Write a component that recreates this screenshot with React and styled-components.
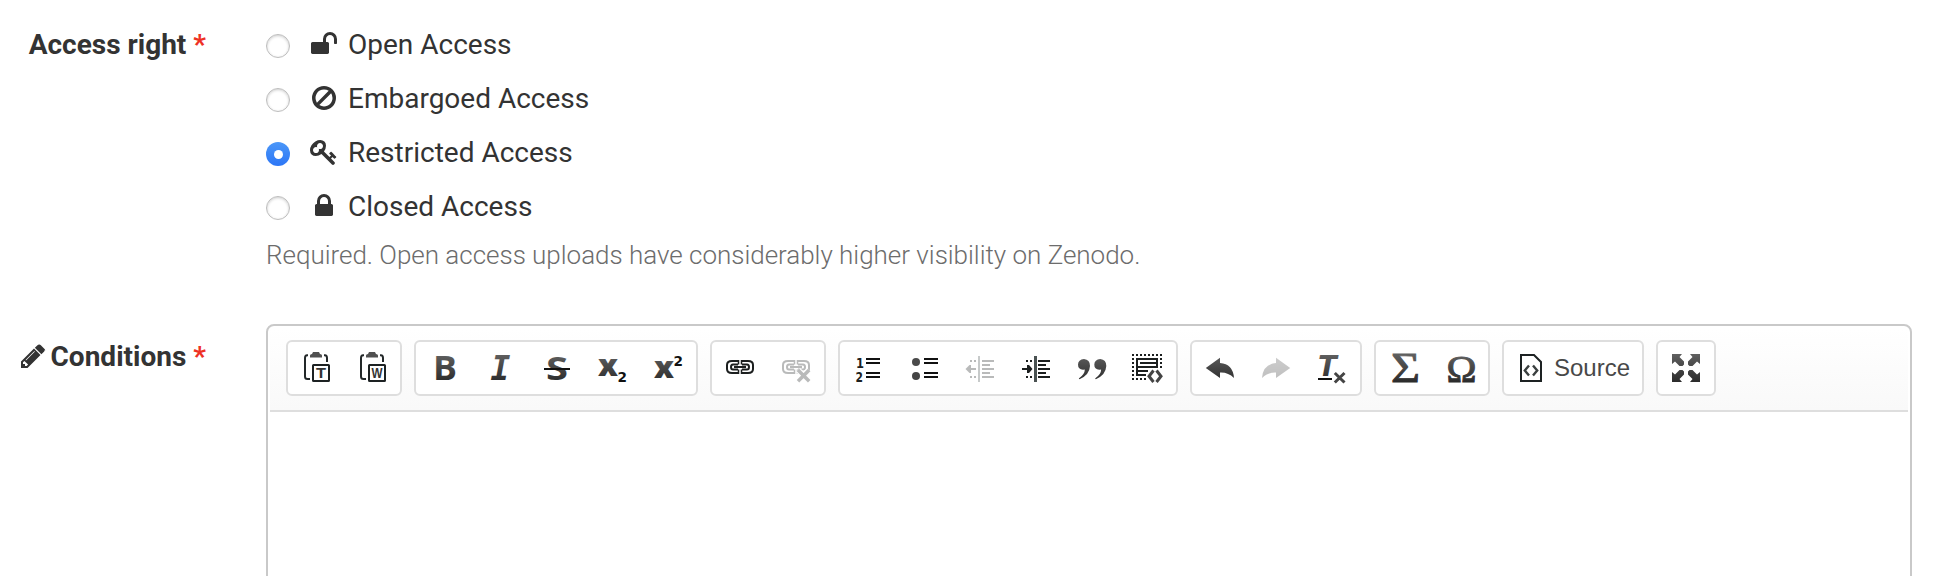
import React from "react";
import styled, { createGlobalStyle } from "styled-components";

const GlobalStyle = createGlobalStyle`
  *, *::before, *::after { box-sizing: border-box; }
  body {
    margin: 0;
    background: #fff;
    color: #333;
    font-family: Roboto, "Liberation Sans", sans-serif;
    font-size: 28px;
    overflow: hidden;
  }
`;

const Form = styled.form`
  height: 576px;
  padding-top: 17px;
  overflow: hidden;
`;

const FormRow = styled.div`
  display: grid;
  grid-template-columns: 206px 1646px;
  column-gap: 60px;
  margin-bottom: ${(p) => p.$gap || 0}px;
`;

const FieldLabel = styled.div`
  display: flex;
  justify-content: flex-end;
  align-items: center;
  height: 54px;
  padding-top: 1px;
  margin-top: ${(p) => p.$offset || 0}px;
  font-weight: 700;
  line-height: 33px;
  white-space: pre;
`;

const Required = styled.span`
  color: #ee3124;
  font-weight: 700;
`;

const Option = styled.label`
  display: flex;
  align-items: center;
  height: 54px;
  line-height: 33px;
`;

const OptionText = styled.span`
  margin-top: 1px;
`;

const Radio = styled.span`
  display: flex;
  align-items: center;
  justify-content: center;
  width: 24px;
  height: 24px;
  margin-top: 4px;
  border-radius: 50%;
  border: ${(p) => (p.$checked ? "0" : "1px solid #bdbdbd")};
  background: ${(p) => (p.$checked ? "linear-gradient(#4b97f8, #2c76f6)" : "#fff")};
  box-shadow: ${(p) => (p.$checked ? "none" : "inset 0 1px 3px rgba(0,0,0,0.2)")};

  &::after {
    content: "";
    width: 9px;
    height: 9px;
    border-radius: 50%;
    background: ${(p) => (p.$checked ? "#fff" : "transparent")};
  }
`;

const AwesomeIcon = styled.svg`
  flex: none;
  width: 28px;
  height: 28px;
  fill: currentColor;
`;

const OptionIcon = styled(AwesomeIcon)`
  margin: 0 10.5px 0 19.5px;
`;

const LabelIcon = styled(AwesomeIcon)`
  margin: -1px 4px 0 0;
`;

const Help = styled.p`
  margin: 2px 0 0;
  height: 40px;
  line-height: 40px;
  font-size: 26px;
  font-weight: 300;
  letter-spacing: -0.02px;
  color: #6c6c6c;
`;

const Editor = styled.div`
  height: 300px;
  padding: 2px;
  border: 2px solid #c9c9c9;
  border-radius: 8px;
  background: #fff;
`;

const Toolbar = styled.div`
  display: flex;
  gap: 12px;
  height: 84px;
  padding: 12px 16px 0;
  border-bottom: 2px solid #dedede;
  border-radius: 4px 4px 0 0;
  background: linear-gradient(#fff, #f9f9f9);
`;

const Group = styled.div`
  display: flex;
  height: 56px;
  border: 2px solid #dedede;
  border-radius: 6px;
  background: #fff;
`;

const Tool = styled.button`
  display: flex;
  align-items: center;
  height: 52px;
  padding: 0 12px;
  border: 0;
  background: none;
  opacity: ${(p) => (p.$off ? 0.3 : 1)};
  color: #484848;
  font: 24px "Liberation Sans", Arial, sans-serif;
`;

const ToolIcon = styled.svg`
  display: block;
  width: 32px;
  height: 32px;
  overflow: visible;
`;

const ToolText = styled.span`
  margin-left: 6px;
`;

const ICONS = {
  unlock:
    "M1728 576v256q0 26-19 45t-45 19h-64q-26 0-45-19t-19-45v-256q0-106-75-181t-181-75-181 75-75 181v192h96q40 0 68 28t28 68v576q0 40-28 68t-68 28h-960q-40 0-68-28t-28-68v-576q0-40 28-68t68-28h672v-192q0-185 131.500-316.500t316.500-131.500 316.500 131.500 131.500 316.500z",
  ban: "M1440 893q0-161-87-295l-754 753q137 89 297 89 111 0 211.500-43.500t173.500-116.500 116-174.500 43-212.500zm-999 299l755-754q-135-91-300-91-148 0-273 73t-198 199-73 274q0 162 89 299zm1223-299q0 157-61 300t-163.500 246-245 164-298.500 61-298.500-61-245-164-163.500-246-61-300 61-299.500 163.500-245.500 245-164 298.500-61 298.500 61 245 164 163.500 245.500 61 299.500z",
  key: "M832 512q0-80-56-136t-136-56-136 56-56 136q0 42 19 83-41-19-83-19-80 0-136 56t-56 136 56 136 136 56 136-56 56-136q0-42-19-83 41 19 83 19 80 0 136-56t56-136zm851 704q0 17-49 66t-66 49q-9 0-28.500-16t-36.500-33-38.500-40-24.500-26l-96 96 220 220q28 28 28 68 0 42-39 81t-81 39q-40 0-68-28l-671-671q-176 131-365 131-163 0-265.500-102.500t-102.500-265.500q0-160 95-313t248-248 313-95q163 0 265.500 102.500t102.500 265.500q0 189-131 365l355 355 96-96q-3-3-26-24.500t-40-38.500-33-36.500-16-28.500q0-17 49-66t66-49q13 0 23 10 6 6 46 44.500t82 79.500 86.500 86 73 78 28.500 41z",
  lock: "M640 768h512v-192q0-106-75-181t-181-75-181 75-75 181v192zm832 96v576q0 40-28 68t-68 28h-960q-40 0-68-28t-28-68v-576q0-40 28-68t68-28h32v-192q0-184 132-316t316-132 316 132 132 316v192h32q40 0 68 28t28 68z",
  pencil:
    "M491 1536l91-91-235-235-91 91v107h128v128h107zm523-928q0-22-22-22-10 0-17 7l-542 542q-7 7-7 17 0 22 22 22 10 0 17-7l542-542q7-7 7-17zm-54-192l416 416-832 832h-416v-416zm683 96q0 64-45 109l-166 166-416-416 166-165q44-46 109-46 64 0 108 46l235 234q46 48 46 110z",
};

const INK = "url(#ink)";
const DARK = "#1c1f1f";

const Clipboard = ({ letter }) => (
  <>
    <path d="M8 3.200H7Q5 3.200 5 6V24.500Q5 27 7.500 27H10M24 3.200H25Q27 3.200 27 6V10" fill="none" stroke="#232829" strokeWidth="2" />
    <path d="M10 5.500V3.500Q10 2 12 2L13 0H19L20 2Q22 2 22 3.500V5.500Z" fill="#505050" />
    <rect x="13" y="13" width="16" height="16" rx="0.500" fill="#fff" stroke="#1d2223" strokeWidth="2" />
    <text x="21" y="26" textAnchor="middle" textLength={letter === "T" ? 10 : 11} lengthAdjust="spacingAndGlyphs" fontFamily="Liberation Sans" fontWeight="700" fontSize="14" fill="#333">
      {letter}
    </text>
  </>
);

const Chain = () => (
  <g fill="none" stroke={DARK} strokeWidth="2">
    <path d="M14.500 9H8Q3 9 3 13V17Q3 21 8 21H14.500M17.500 9H24Q29 9 29 13V17Q29 21 24 21H17.500" />
    <path d="M14 12.500H9Q7 12.500 7 15T9 17.500H14M18 12.500H23Q25 12.500 25 15T23 17.500H18" />
    <path d="M10 15H22" />
    <path d="M14.500 8V12.500M17.500 8V12.500M14.500 17.500V22M17.500 17.500V22" strokeWidth="1.500" />
  </g>
);

const Indentation = ({ inward }) => (
  <>
    <rect x="14" y="4" width={inward ? 3 : 2} height="26" fill="#4a5252" />
    <path d="M6 8h2v2H6zM10 8h2v2h-2zM6 24h2v2H6zM10 24h2v2h-2z" fill={DARK} />
    <path d="M18 8h12v2H18zM18 12h8v2h-8zM18 16h12v2H18zM18 20h8v2h-8zM18 24h12v2H18z" fill={DARK} />
    <path
      d={inward ? "M2 16h5v-3l2 0 3.500 4-3.500 4h-2v-3H2z" : "M12 16H7v-3H5.500L1.500 17l4 4H7v-3h5z"}
      fill={DARK}
    />
  </>
);

const Arrow = () => <path d="M1.800 16L16 5.800V11Q29 12 30 26Q24 20 16 20.500V26Z" fill={INK} />;

const Script = ({ baseline, markBaseline }) => (
  <>
    <text x="2" y={baseline} fontFamily="Open Sans" fontWeight="800" fontSize="30" textLength="20" lengthAdjust="spacingAndGlyphs" fill={INK}>x</text>
    <text x="21.500" y={markBaseline} fontFamily="DejaVu Sans" fontWeight="700" fontSize="13.500" textLength="9.500" lengthAdjust="spacingAndGlyphs" fill="#111">2</text>
  </>
);

const GRAPHICS = {
  pasteText: <Clipboard letter="T" />,
  pasteWord: <Clipboard letter="W" />,
  bold: (
    <text x="5" y="28" textLength="24" lengthAdjust="spacingAndGlyphs" fontFamily="Open Sans" fontWeight="700" fontSize="33.500" fill={INK}>B</text>
  ),
  italic: (
    <text x="6.500" y="28" fontFamily="DejaVu Sans Mono" fontStyle="italic" fontWeight="700" fontSize="33" fill={INK}>I</text>
  ),
  strike: (
    <>
      <text x="6" y="27.600" textLength="22" lengthAdjust="spacingAndGlyphs" fontFamily="Open Sans" fontWeight="700" fontSize="32.500" fill={INK}>S</text>
      <rect x="4" y="16" width="26" height="2" fill="#111" />
    </>
  ),
  sub: <Script baseline={24} markBaseline={30} />,
  sup: <Script baseline={26} markBaseline={14} />,
  link: <Chain />,
  unlink: (
    <>
      <Chain />
      <path d="M18 18L29 29M29 18L18 29" stroke="#fff" strokeWidth="6" />
      <path d="M18 18L29.200 29.200M29.200 18L18 29.200" stroke={DARK} strokeWidth="3.500" />
    </>
  ),
  numbered: (
    <>
      <text x="4" y="16" fontFamily="DejaVu Sans" fontWeight="700" fontSize="13.500" textLength="8" lengthAdjust="spacingAndGlyphs" fill={DARK}>1</text>
      <text x="3.500" y="30" fontFamily="DejaVu Sans" fontWeight="700" fontSize="13.500" textLength="7.500" lengthAdjust="spacingAndGlyphs" fill={DARK}>2</text>
      <path d="M14 6h14v2H14zM14 10h14v2H14zM14 20h14v2H14zM14 24h14v2H14z" fill="#111" />
    </>
  ),
  bulleted: (
    <>
      <circle cx="8" cy="10" r="4" fill="#4a4a4a" />
      <circle cx="8" cy="24" r="4" fill="#444" />
      <path d="M16 6h14v2H16zM16 10h14v2H16zM16 20h14v2H16zM16 24h14v2H16z" fill="#111" />
    </>
  ),
  outdent: <Indentation />,
  indent: <Indentation inward />,
  quote: (
    <>
      <path d="M8 7Q14 7.500 14 14Q13.500 23 3.500 27.200L2.800 26.500Q9 22 8.800 17.500Q2 18.500 2 12.500Q2.200 7.500 8 7Z" fill={INK} />
      <path d="M24.300 7Q30.300 7.500 30.300 14Q29.800 23 19.800 27.200L19.100 26.500Q25.300 22 25.100 17.500Q18.300 18.500 18.300 12.500Q18.500 7.500 24.300 7Z" fill={INK} />
    </>
  ),
  div: (
    <>
      <path d="M0 3H31" stroke={DARK} strokeWidth="2" strokeDasharray="2" />
      <path d="M1 6V28M29 6V16" stroke={DARK} strokeWidth="2" strokeDasharray="2" />
      <path d="M0 27H15" stroke={DARK} strokeWidth="2" strokeDasharray="2" />
      <path d="M4 6h22v2H4zM4 8h2v16H4zM24 8h2v8h-2zM8 10h16v2H8zM6 14h18v2H6zM6 18h10v2H6zM4 22h10v2H4z" fill={DARK} />
      <path d="M21.500 18.500L17 24.200L21.500 30M24.500 18.500L29 24.200L24.500 30" fill="none" stroke="#444" strokeWidth="3" />
    </>
  ),
  undo: <Arrow />,
  redo: (
    <g transform="matrix(-1 0 0 1 32 0)">
      <Arrow />
    </g>
  ),
  clear: (
    <>
      <text x="2" y="24" fontFamily="DejaVu Sans" fontStyle="italic" fontWeight="700" fontSize="27.500" fill={INK}>T</text>
      <rect x="2" y="26" width="14" height="2" fill="#111" />
      <path d="M18.800 21L28.500 30.500M28.500 21L18.800 30.500" stroke="#444" strokeWidth="3" />
    </>
  ),
  sigma: (
    <text x="3" y="29.500" textLength="29" lengthAdjust="spacingAndGlyphs" fontFamily="Liberation Serif" fontSize="41.500" fill={INK} stroke={INK} strokeWidth="0.900">Σ</text>
  ),
  omega: (
    <text x="2.500" y="29.500" textLength="30" lengthAdjust="spacingAndGlyphs" fontFamily="Liberation Serif" fontSize="38.500" fill={INK} stroke={INK} strokeWidth="1">Ω</text>
  ),
  source: (
    <>
      <path d="M5 3H18L25 10V29H5Z" fill="none" stroke="#1d2223" strokeWidth="2" />
      <path d="M13 13.500L8.800 18.500L13 23.500M17 13.500L21.200 18.500L17 23.500" fill="none" stroke="#3a3f3f" strokeWidth="2.400" />
    </>
  ),
  maximize: (
    <path
      fill={INK}
      d="M2 2H12L9.500 5L14 9.500V12.500L12.500 14H9.500L5 9.500L2 12ZM30 2H20L22.500 5L18 9.500V12.500L19.500 14H22.500L27 9.500L30 12ZM2 30H12L9.500 27L14 22.500V19.500L12.500 18H9.500L5 22.500L2 20ZM30 30H20L22.500 27L18 22.500V19.500L19.500 18H22.500L27 22.500L30 20Z"
    />
  ),
};

const GROUPS = [
  ["pasteText", "pasteWord"],
  ["bold", "italic", "strike", "sub", "sup"],
  ["link", "unlink"],
  ["numbered", "bulleted", "outdent", "indent", "quote", "div"],
  ["undo", "redo", "clear"],
  ["sigma", "omega"],
  ["source"],
  ["maximize"],
];

const DISABLED = ["unlink", "outdent", "redo"];

const OPTIONS = [
  { icon: "unlock", text: "Open Access" },
  { icon: "ban", text: "Embargoed Access" },
  { icon: "key", text: "Restricted Access", checked: true },
  { icon: "lock", text: "Closed Access" },
];

export default function App() {
  return (
    <>
      <GlobalStyle />
      <Form>
        <FormRow $gap={49}>
          <FieldLabel>
            Access right <Required>*</Required>
          </FieldLabel>
          <div>
            {OPTIONS.map((o) => (
              <Option key={o.icon}>
                <Radio $checked={o.checked} />
                <OptionIcon viewBox="0 0 1792 1792">
                  <path d={ICONS[o.icon]} />
                </OptionIcon>
                <OptionText>{o.text}</OptionText>
              </Option>
            ))}
            <Help>Required. Open access uploads have considerably higher visibility on Zenodo.</Help>
          </div>
        </FormRow>
        <FormRow>
          <FieldLabel $offset={5}>
            <LabelIcon viewBox="0 0 1792 1792">
              <path d={ICONS.pencil} />
            </LabelIcon>
            Conditions <Required>*</Required>
          </FieldLabel>
          <Editor>
            <Toolbar>
              {GROUPS.map((group) => (
                <Group key={group[0]}>
                  {group.map((name) => (
                    <Tool key={name} type="button" $off={DISABLED.includes(name)}>
                      <ToolIcon viewBox="0 0 32 32">
                        <defs>
                          <linearGradient id="ink" gradientUnits="userSpaceOnUse" x1="0" y1="2" x2="0" y2="30">
                            <stop offset="0" stopColor="#606060" />
                            <stop offset="1" stopColor="#2b2b2b" />
                          </linearGradient>
                        </defs>
                        {GRAPHICS[name]}
                      </ToolIcon>
                      {name === "source" && <ToolText>Source</ToolText>}
                    </Tool>
                  ))}
                </Group>
              ))}
            </Toolbar>
          </Editor>
        </FormRow>
      </Form>
    </>
  );
}
